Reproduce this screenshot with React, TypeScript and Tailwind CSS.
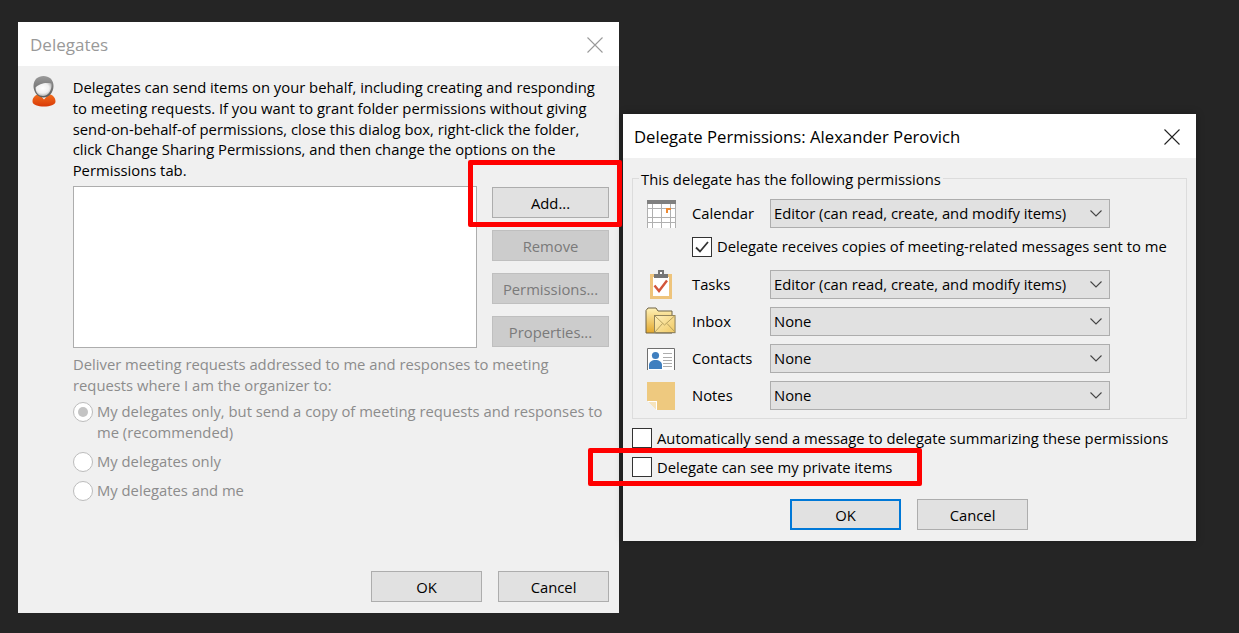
import type { ReactNode } from "react";

const FONT = "font-['Open_Sans','Noto_Sans',sans-serif]";

function CloseIcon({ color }: { color: string }) {
  return (
    <svg width="16" height="16" viewBox="0 0 16 16" fill="none" stroke={color} strokeWidth="1.1">
      <path d="M0.5 0.5L15.5 15.5M15.5 0.5L0.5 15.5" />
    </svg>
  );
}

function Chevron() {
  return (
    <svg width="12" height="7" viewBox="0 0 12 7" fill="none" stroke="#444" strokeWidth="1.1">
      <path d="M0.5 0.5L6 6L11.5 0.5" />
    </svg>
  );
}

function PersonIcon() {
  return (
    <svg width="24" height="32" viewBox="0 0 24 32">
      <defs>
        <radialGradient id="face" cx="0.45" cy="0.4" r="0.7">
          <stop offset="0" stopColor="#ffffff" />
          <stop offset="0.55" stopColor="#f0f0f0" />
          <stop offset="1" stopColor="#9c9c9c" />
        </radialGradient>
        <linearGradient id="hair" x1="0" y1="0" x2="0" y2="1">
          <stop offset="0" stopColor="#9a9a9a" />
          <stop offset="1" stopColor="#5c5c5c" />
        </linearGradient>
        <linearGradient id="shirt" x1="0" y1="0" x2="0" y2="1">
          <stop offset="0" stopColor="#f4701f" />
          <stop offset="1" stopColor="#d83a08" />
        </linearGradient>
      </defs>
      <path d="M0.500 26.500c0-4 2.500-6.500 6.500-7.500l5 5.500 5-5.500c4 1 6.500 3.500 6.500 7.500 0 3.500-5.500 5-11.500 5S0.500 30 0.500 26.500z" fill="url(#shirt)" />
      <path d="M1.500 11C1.500 4.500 6 1 11.500 1S21.500 4.500 21.500 11c0 6-4 11.500-10 11.500S1.500 17 1.500 11z" fill="url(#hair)" />
      <path d="M3.500 12.500c3-3.500 10-5.500 16-4 .8 6-3 12.500-8.500 12.500-4.500 0-7.500-3.500-7.500-8.500z" fill="url(#face)" />
    </svg>
  );
}

function CalendarIcon() {
  return (
    <svg width="29" height="28" viewBox="0 0 29 28" shapeRendering="crispEdges">
      <rect width="29" height="28" fill="#fff" />
      <rect width="29" height="4" fill="#7f7f7f" />
      <path
        d="M0.500 4V28M5.500 4V28M14.500 4V28M23.500 4V28M28.500 4V28M0 8.500H29M0 17.500H29M0 22.500H29"
        stroke="#b0b0b0"
        fill="none"
      />
      <path d="M19 8H24V9.500H20.500V13H19z" fill="#ee8a32" />
    </svg>
  );
}

function TasksIcon() {
  return (
    <svg width="22" height="29" viewBox="0 0 22 29" shapeRendering="crispEdges">
      <rect y="4" width="22" height="25" rx="1" fill="#eec47c" />
      <rect x="3" y="7" width="16" height="19" fill="#fff" />
      <rect x="4" y="4" width="14" height="4" fill="#767676" />
      <rect x="8" y="0" width="6" height="5" fill="#767676" />
      <rect x="10" y="2" width="2" height="2" fill="#fff" />
      <path d="M4.500 15.500L9 21L17 10.500" fill="none" stroke="#d2553a" strokeWidth="2.400" shapeRendering="auto" />
    </svg>
  );
}

function InboxIcon() {
  return (
    <svg width="32" height="29" viewBox="0 0 32 29">
      <defs>
        <linearGradient id="folder" x1="0" y1="0" x2="0" y2="1">
          <stop offset="0" stopColor="#fff2b8" />
          <stop offset="1" stopColor="#e3a82d" />
        </linearGradient>
        <linearGradient id="envelope" x1="0" y1="0" x2="1" y2="1">
          <stop offset="0" stopColor="#fff0bb" />
          <stop offset="1" stopColor="#f0c964" />
        </linearGradient>
      </defs>
      <path d="M1 3.500L3 1h8l2 3h14v22H1z" fill="url(#folder)" stroke="#6f6244" />
      <rect x="10.500" y="9.500" width="20" height="17" fill="#00000030" />
      <rect x="9.500" y="8.500" width="20.500" height="17" fill="url(#envelope)" stroke="#94855c" />
      <path d="M10 9l9.500 9L29.500 9M10 25l7.500-8.500M30 25l-8-8.500" fill="none" stroke="#b7a15f" />
    </svg>
  );
}

function ContactsIcon() {
  return (
    <svg width="28" height="22" viewBox="0 0 28 22">
      <rect width="28" height="22" fill="#fff" />
      <path d="M0.500 22V0.500H27.500V22" fill="none" stroke="#6f6f6f" />
      <circle cx="8.500" cy="7.500" r="3.600" fill="#3f7fbf" />
      <path d="M2 21v-4c0-3 3-5 6.500-5s6.500 2 6.500 5v4z" fill="#3f7fbf" />
      <path d="M16 5.500H25M16 9.500H25M16 12.500H25M16 15.500H25M16 18.500H25" stroke="#adadad" />
    </svg>
  );
}

function NotesIcon() {
  return (
    <svg width="28" height="28" viewBox="0 0 28 28" shapeRendering="crispEdges">
      <path d="M0 0H28V28H10L0 19z" fill="#eec97f" />
      <path d="M0 19H9.500V28z" fill="#f6e4bd" />
      <path d="M9.500 28V19.500H1" fill="none" stroke="#fff" />
    </svg>
  );
}

function Button({
  label,
  disabled,
  primary,
}: {
  label: string;
  disabled?: boolean;
  primary?: boolean;
}) {
  const tone = disabled
    ? "bg-[#cccccc] border-[#bfbfbf] text-[#7a7a7a]"
    : primary
      ? "bg-[#e1e1e1] border-2 border-[#0078d7] text-black"
      : "bg-[#e1e1e1] border-[#adadad] text-black";
  return (
    <div className={`flex h-[31px] w-full items-center justify-center border pt-[1px] ${tone}`}>{label}</div>
  );
}

function Radio({ checked }: { checked?: boolean }) {
  return (
    <span className="flex h-5 w-5 shrink-0 items-center justify-center rounded-full border border-[#bcbcbc] bg-white">
      {checked && <span className="h-[10px] w-[10px] rounded-full bg-[#c4c4c4]" />}
    </span>
  );
}

function Check({ checked }: { checked?: boolean }) {
  return (
    <span className="flex h-5 w-5 shrink-0 items-center justify-center border border-[#333] bg-white">
      {checked && (
        <svg width="14" height="12" viewBox="0 0 14 12" fill="none" stroke="#333" strokeWidth="1.800">
          <path d="M1 6.500L5 10.500L13 1" />
        </svg>
      )}
    </span>
  );
}

function Select({ value }: { value: string }) {
  return (
    <div className="flex h-[29px] w-[340px] items-center justify-between border border-[#adadad] bg-[#e1e1e1] pl-[3px] pr-[7px]">
      <span>{value}</span>
      <Chevron />
    </div>
  );
}

function PermRow({ icon, label, value }: { icon: ReactNode; label: string; value: string }) {
  return (
    <div className="flex h-[29px] items-center">
      <div className="flex w-[59px] justify-center pr-[3px]">{icon}</div>
      <div className="w-[78px]">{label}</div>
      <Select value={value} />
    </div>
  );
}

function DelegatesDialog() {
  return (
    <div className="absolute left-[18px] top-[22px] flex h-[591px] w-[601px] flex-col">
      <div className="flex h-[44px] items-center justify-between bg-white pl-[12px] pr-[16px] pt-[1px] text-[17px] text-[#999]">
        <span>Delegates</span>
        <CloseIcon color="#9a9a9a" />
      </div>
      <div className="flex flex-1 flex-col bg-[#f0f0f0] pl-[14px] pr-[10px] pt-[11px]">
        <div className="flex">
          <div className="w-[41px] -mt-[2px]">
            <PersonIcon />
          </div>
          <p className="h-[105px] w-[540px] whitespace-nowrap leading-[20.8px] text-black">
            Delegates can send items on your behalf, including creating and responding
            <br />
            to meeting requests. If you want to grant folder permissions without giving
            <br />
            send-on-behalf-of permissions, close this dialog box, right-click the folder,
            <br />
            click Change Sharing Permissions, and then change the options on the
            <br />
            Permissions tab.
          </p>
        </div>
        <div className="ml-[41px] mt-[4px] flex justify-between">
          <div className="h-[162px] w-[404px] border border-[#adadad] bg-white" />
          <div className="flex w-[117px] flex-col gap-[12px] pt-[1px]">
            <Button label="Add..." />
            <Button label="Remove" disabled />
            <Button label="Permissions..." disabled />
            <Button label="Properties..." disabled />
          </div>
        </div>
        <div className="ml-[41px] mt-[6px] whitespace-nowrap leading-[21px] text-[#8c8c8c]">
          <p>
            Deliver meeting requests addressed to me and responses to meeting
            <br />
            requests where I am the organizer to:
          </p>
          <div className="mt-[6px] flex gap-[4px]">
            <Radio checked />
            <span className="-mt-[1px]">
              My delegates only, but send a copy of meeting requests and responses to
              <br />
              me (recommended)
            </span>
          </div>
          <div className="mt-[9px] flex gap-[4px]">
            <Radio />
            <span className="-mt-[1px]">My delegates only</span>
          </div>
          <div className="mt-[9px] flex gap-[4px]">
            <Radio />
            <span className="-mt-[1px]">My delegates and me</span>
          </div>
        </div>
        <div className="mt-auto mb-[11px] flex justify-end gap-[16px]">
          <div className="w-[111px]">
            <Button label="OK" />
          </div>
          <div className="w-[111px]">
            <Button label="Cancel" />
          </div>
        </div>
      </div>
    </div>
  );
}

function PermissionsDialog() {
  return (
    <div className="absolute left-[623px] top-[114px] flex h-[427px] w-[573px] flex-col shadow-[0_0_8px_rgba(0,0,0,0.25)]">
      <div className="flex h-[44px] items-center justify-between bg-white pl-[11px] pr-[16px] pt-[1px] text-[16.700px] text-black">
        <span>Delegate Permissions: Alexander Perovich</span>
        <CloseIcon color="#222" />
      </div>
      <div className="flex flex-1 flex-col whitespace-nowrap bg-[#f0f0f0] pl-[9px] pr-[9px] pt-[20px]">
        <div className="relative h-[241px] w-[555px] border border-[#dcdcdc] pt-[20px]">
          <span className="absolute -top-[10px] left-[6px] bg-[#f0f0f0] px-[2px] leading-[20px]">
            This delegate has the following permissions
          </span>
          <PermRow icon={<CalendarIcon />} label="Calendar" value="Editor (can read, create, and modify items)" />
          <div className="ml-[59px] mt-[8px] flex h-[21px] items-center gap-[5px]">
            <Check checked />
            <span>Delegate receives copies of meeting-related messages sent to me</span>
          </div>
          <div className="mt-[13px] flex flex-col gap-[8px]">
            <PermRow icon={<TasksIcon />} label="Tasks" value="Editor (can read, create, and modify items)" />
            <PermRow icon={<InboxIcon />} label="Inbox" value="None" />
            <PermRow icon={<ContactsIcon />} label="Contacts" value="None" />
            <PermRow icon={<NotesIcon />} label="Notes" value="None" />
          </div>
        </div>
        <div className="mt-[9px] flex h-[20px] items-center gap-[5px]">
          <Check />
          <span>Automatically send a message to delegate summarizing these permissions</span>
        </div>
        <div className="mt-[9px] flex h-[20px] items-center gap-[5px]">
          <Check />
          <span>Delegate can see my private items</span>
        </div>
        <div className="ml-[158px] mt-[22px] flex gap-[16px]">
          <div className="w-[111px]">
            <Button label="OK" primary />
          </div>
          <div className="w-[111px]">
            <Button label="Cancel" />
          </div>
        </div>
      </div>
    </div>
  );
}

export default function App() {
  return (
    <div className={`relative h-[633px] w-[1239px] overflow-hidden bg-[#252525] text-[14.800px] ${FONT}`}>
      <DelegatesDialog />
      <PermissionsDialog />
      {/* red callouts over the screenshot */}
      <div className="absolute left-[468px] top-[160px] h-[67px] w-[154px] rounded-[2px] border-[5px] border-[#ff0000]" />
      <div className="absolute left-[588px] top-[448px] h-[38px] w-[334px] rounded-[2px] border-[5px] border-[#ff0000]" />
    </div>
  );
}
